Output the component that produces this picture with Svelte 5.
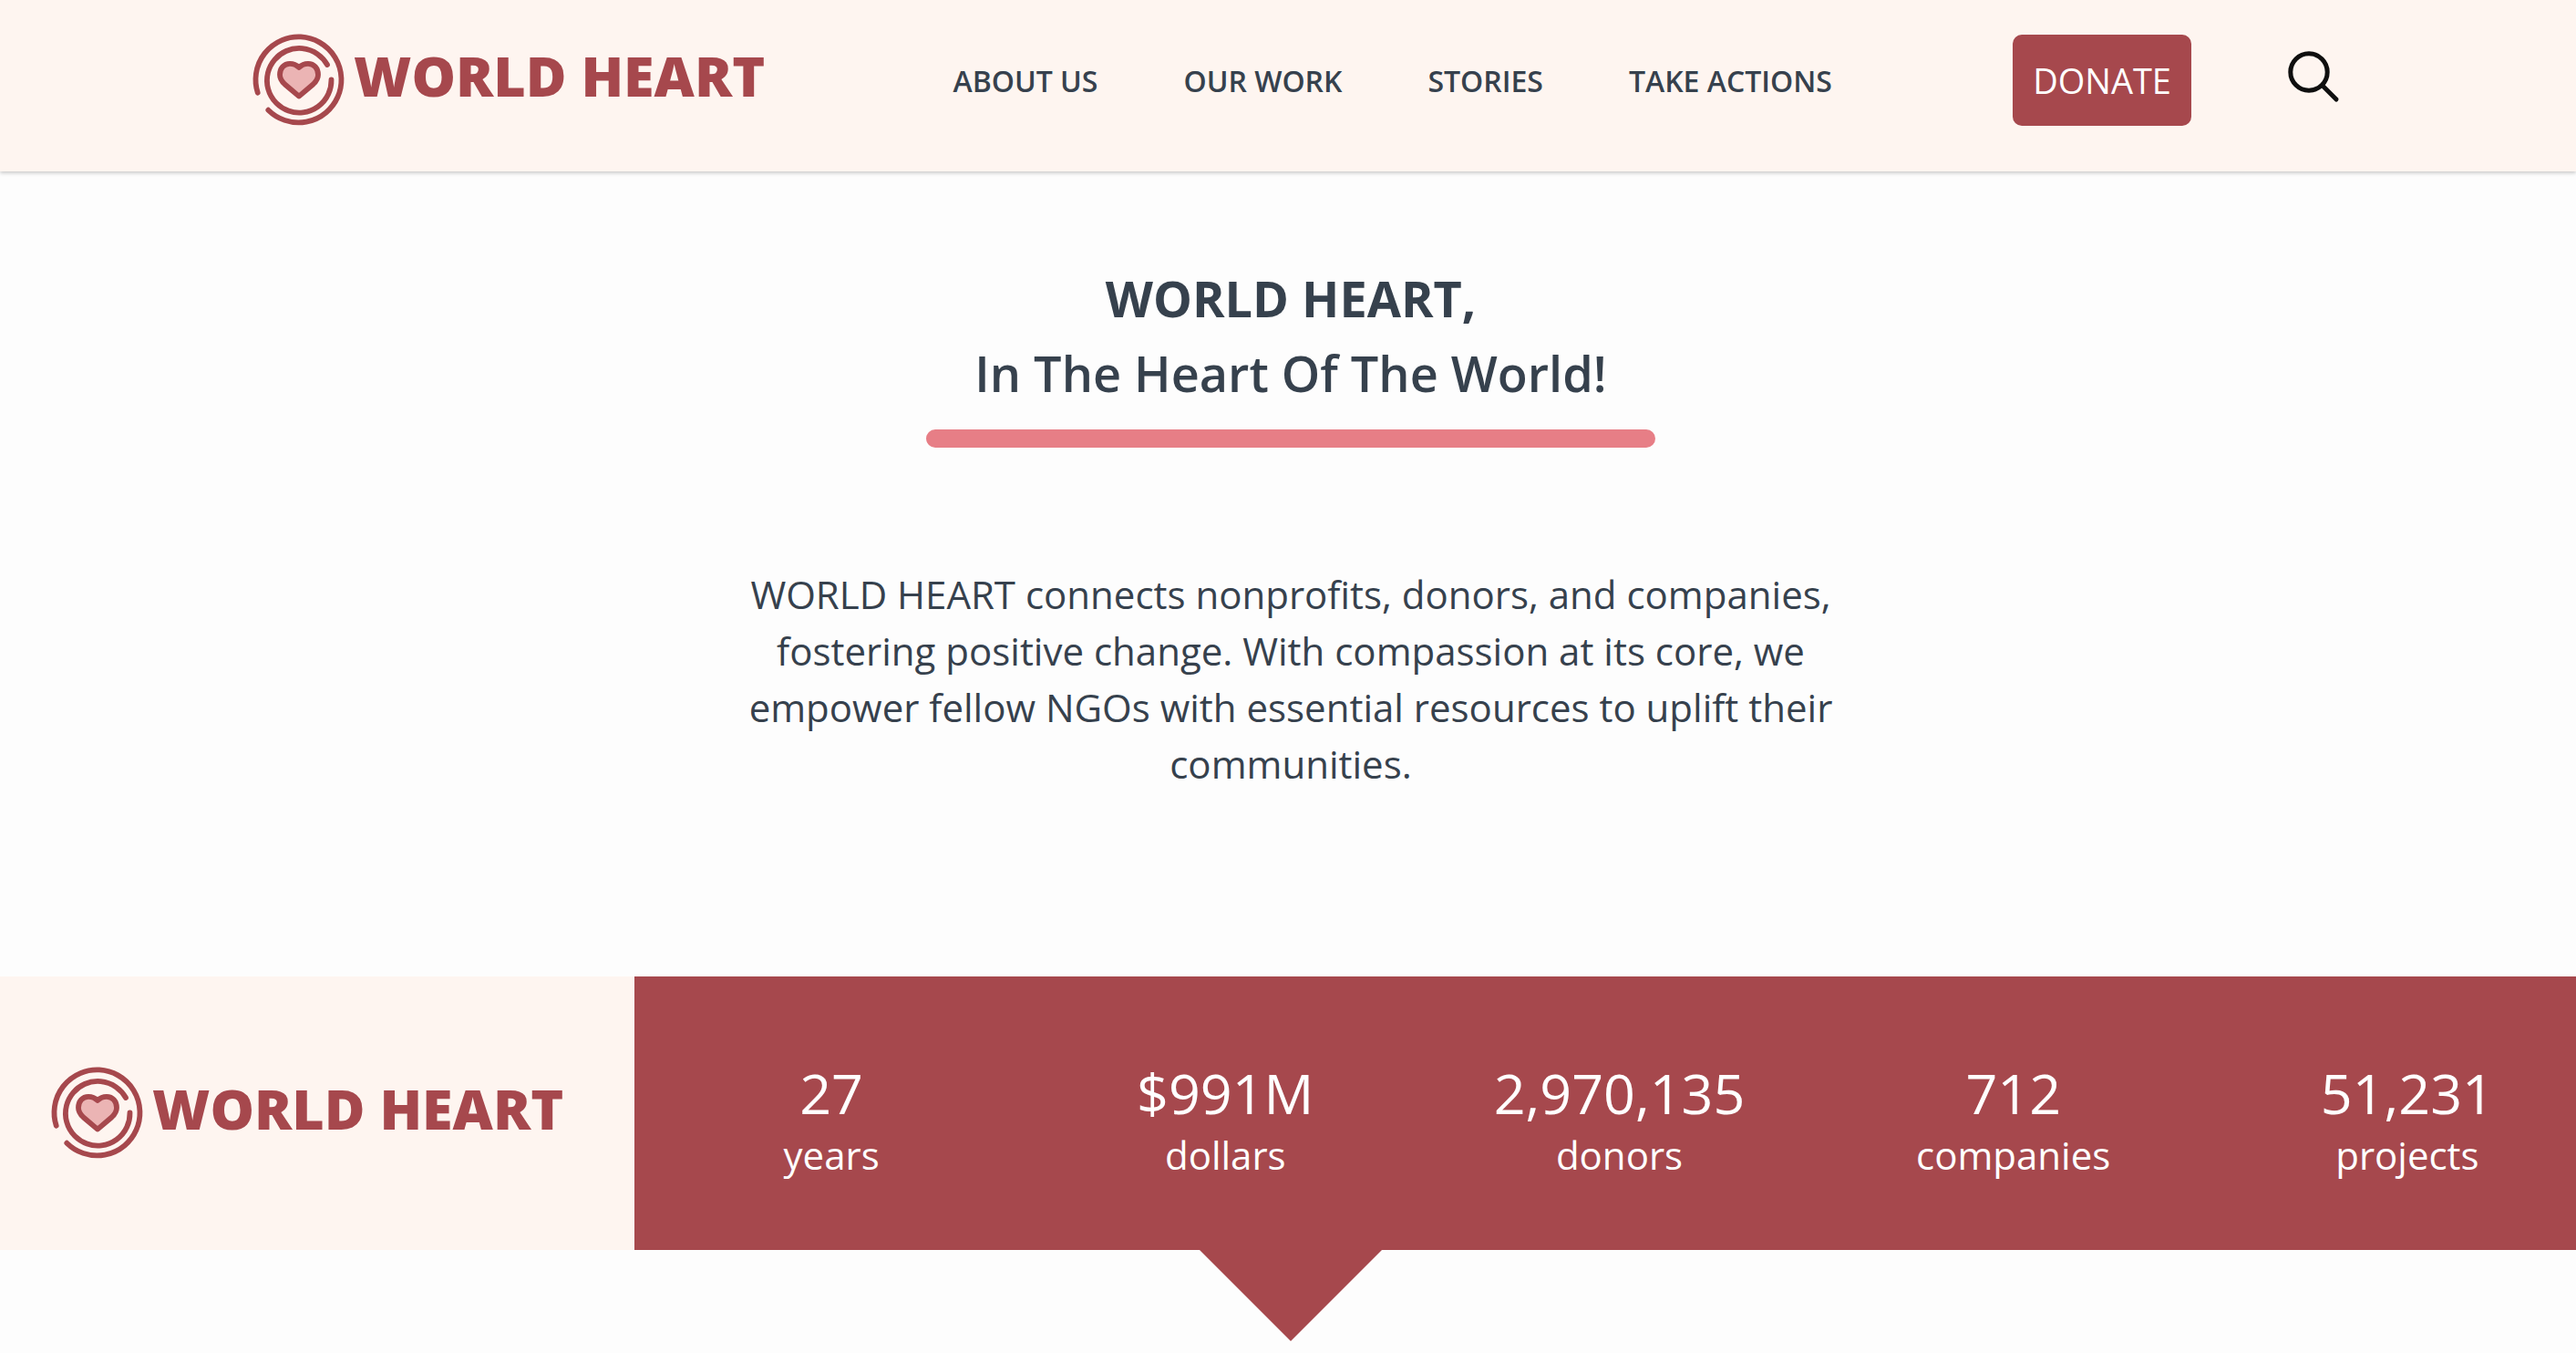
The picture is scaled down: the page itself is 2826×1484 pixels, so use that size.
<script>
  const links = ['ABOUT US', 'OUR WORK', 'STORIES', 'TAKE ACTIONS'];
  const stats = [
    { value: '27', label: 'years' },
    { value: '$991M', label: 'dollars' },
    { value: '2,970,135', label: 'donors' },
    { value: '712', label: 'companies' },
    { value: '51,231', label: 'projects' }
  ];
</script>

{#snippet brand()}
  <a class="brand" href="#home">
    <svg class="emblem" viewBox="0 0 100 100" aria-hidden="true">
      <path class="ring" d="M16.3 82.7A47 47 0 1 0 4.7 63.7" />
      <path class="ring" d="M81 33A35.3 35.3 0 1 0 85.5 49.5" />
      <path
        class="heart"
        d="M50 36C47 33 44 31.8 40 31.8C33.5 31.8 29 37 29 44C29 48.5 31.5 51.7 34.5 54.5L50 67.6L65.5 54.5C68.5 51.7 71 48.5 71 44C71 37 66.5 31.8 60 31.8C56 31.8 53 33 50 36Z"
      />
    </svg>
    <span class="wordmark">WORLD HEART</span>
  </a>
{/snippet}

<div class="page">
  <header class="topbar">
    {@render brand()}
    <nav class="links" aria-label="Main">
      {#each links as link}
        <a href="#{link.toLowerCase().replace(' ', '-')}">{link}</a>
      {/each}
    </nav>
    <div class="actions">
      <button class="donate" type="button">DONATE</button>
      <button class="search" type="button" aria-label="Search">
        <svg viewBox="0 0 64 64" aria-hidden="true">
          <circle cx="29" cy="29" r="20.2" />
          <path d="M44 44L59 59" />
        </svg>
      </button>
    </div>
  </header>

  <main>
    <section class="intro">
      <h1><strong>WORLD HEART,</strong><br />In The Heart Of The World!</h1>
      <div class="rule"></div>
      <p>
        WORLD HEART connects nonprofits, donors, and companies, fostering positive change. With
        compassion at its core, we empower fellow NGOs with essential resources to uplift their
        communities.
      </p>
    </section>

    <section class="impact">
      <div class="impact-brand">{@render brand()}</div>
      <dl class="stats">
        {#each stats as stat}
          <div class="stat">
            <dd>{stat.value}</dd>
            <dt>{stat.label}</dt>
          </div>
        {/each}
      </dl>
    </section>
    <div class="pointer"></div>
  </main>
</div>

<style>
  :global(body) {
    background: #fdfdfd;
    color: #36414d;
    font-family: 'Open Sans', 'Noto Sans', sans-serif;
    overflow-x: hidden;
  }

  .page {
    overflow: hidden;
  }

  .topbar {
    position: relative;
    display: flex;
    justify-content: space-between;
    align-items: flex-start;
    padding: 38px 258px 48px 278px;
    background: #fef5f0;
    box-shadow: 0 2px 4px rgba(0, 0, 0, 0.2);
  }

  .brand {
    display: flex;
    align-items: center;
    gap: 10px;
    height: 100px;
    color: #a6484d;
    text-decoration: none;
  }

  .emblem {
    width: 100px;
    height: 100px;
    flex: none;
    overflow: visible;
  }

  .ring,
  .heart {
    fill: none;
    stroke: #a6484d;
    stroke-width: 5.8;
    stroke-linecap: round;
    stroke-linejoin: round;
  }

  .heart {
    fill: #ebb4b4;
  }

  .wordmark {
    padding-bottom: 10px;
    font-size: 61px;
    font-weight: 800;
    line-height: 60px;
    white-space: nowrap;
  }

  .links {
    display: flex;
    align-items: center;
    gap: 94px;
    height: 102px;
    padding-left: 8px;
  }

  .links a {
    color: inherit;
    font-size: 32px;
    font-weight: 600;
    line-height: 48px;
    text-decoration: none;
    white-space: nowrap;
  }

  .actions {
    display: flex;
    gap: 100px;
  }

  .donate {
    height: 100px;
    padding: 0 22px;
    border: 0;
    border-radius: 10px;
    background: #a6484d;
    color: #fff;
    font: 400 38px/48px 'Open Sans', sans-serif;
  }

  .search {
    width: 64px;
    height: 64px;
    margin-top: 12px;
    padding: 0;
    border: 0;
    background: none;
  }

  .search svg {
    display: block;
    fill: none;
    stroke: #0f0f0f;
    stroke-width: 5;
    stroke-linecap: round;
  }

  main {
    margin-right: -6px;
  }

  .intro {
    padding: 98px 0 202px;
    text-align: center;
  }

  h1 {
    margin: 0;
    font-size: 54px;
    font-weight: 600;
    line-height: 82px;
  }

  h1 strong {
    font-weight: 700;
  }

  .rule {
    width: 800px;
    height: 20px;
    margin: 21px auto 130px;
    border-radius: 10px;
    background: #e77e86;
  }

  p {
    max-width: 1200px;
    margin: 0 auto;
    font-size: 42px;
    line-height: 62px;
  }

  .impact {
    display: flex;
    min-height: 300px;
    background: #a6484d;
  }

  .impact-brand {
    display: flex;
    align-items: center;
    box-sizing: border-box;
    width: 696px;
    padding-left: 57px;
    background: #fef5f0;
  }

  .stats {
    flex: 1;
    display: grid;
    grid-template-columns: repeat(5, minmax(0, 1fr));
    align-content: center;
    margin: 0 -25px 0 0;
    padding-top: 18px;
    color: #fff;
    text-align: center;
  }

  .stat {
    display: flex;
    flex-direction: column;
  }

  dd {
    margin: 0;
    font-size: 61px;
    line-height: 74px;
  }

  dt {
    font-size: 42px;
    line-height: 62px;
  }

  .pointer {
    width: 200px;
    height: 100px;
    margin: 0 auto;
    background: #a6484d;
    clip-path: polygon(0 0, 100% 0, 50% 100%);
  }
</style>
